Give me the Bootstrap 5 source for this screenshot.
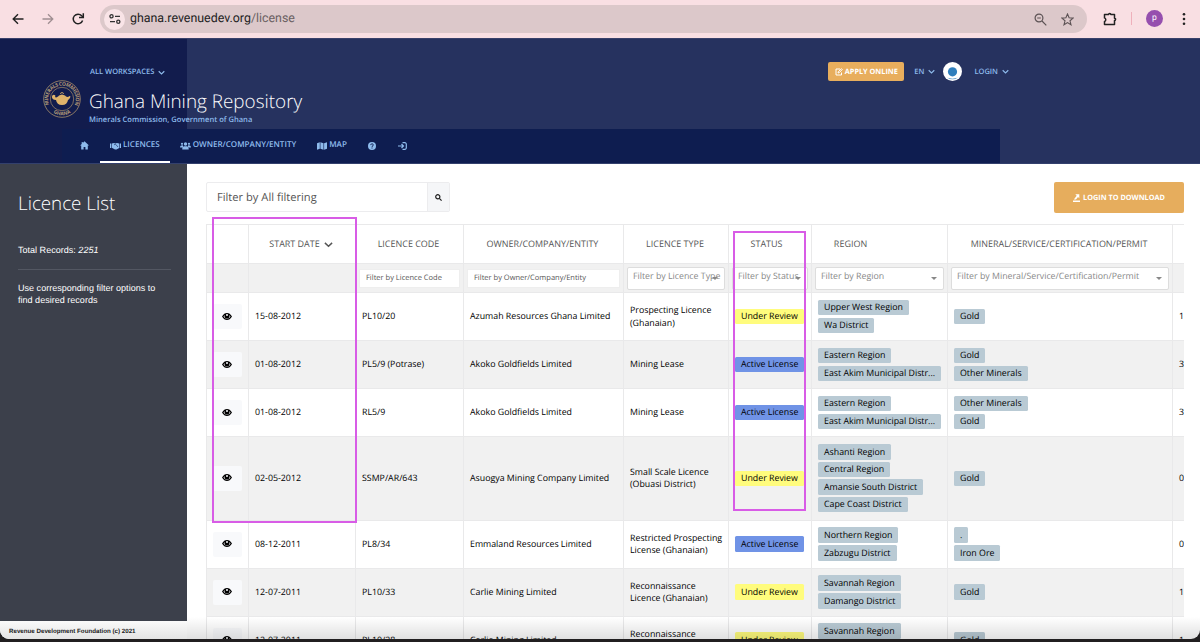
<!DOCTYPE html>
<html lang="en">
<head>
  <meta charset="UTF-8">
  <meta name="viewport" content="width=device-width, initial-scale=1.0">
  <title>Ghana Mining Repository</title>
  <link href="https://cdn.jsdelivr.net/npm/bootstrap@5.3.0/dist/css/bootstrap.min.css" rel="stylesheet">
  <style>
    body {
      background-color: #211f20;
      font-family: "Open Sans", sans-serif;
      font-size: 8.82px;
      line-height: 12.5px;
      color: #000;
      overflow: hidden;
      text-rendering: geometricPrecision;
    }
    svg { display: block; flex: none; }
    .window { height: 639px; background: #fff; border-radius: 0 0 9px 9px; }

    /* Browser bar */
    .browser-bar { height: 38px; background: #f9dfe3; padding: 0 9px 1px 12px; color: #222; }
    .icon-forward { margin-left: 18px; }
    .icon-reload { margin-left: 17px; }
    .address { width: 987px; height: 28px; border-radius: 14px; background: #dcc8ca; margin-left: 15px; padding: 1px 13px 0 4px; font: 12.4px/28px Roboto, sans-serif; }
    .address-path { color: #6a6062; }
    .site-info { width: 21px; height: 21px; background: #f9e4e7; margin-right: 5px; }
    .icon-star { margin-left: 14px; }
    .bar-divider { width: 1px; height: 13px; background: #efb0bb; }
    .profile { width: 17px; height: 17px; background: #964fae; color: #fff; font: 8.5px/17px Roboto, sans-serif; }

    /* Header */
    .site-header { height: 126px; background: linear-gradient(90deg, #121c4d 187px, #26325f 187px); border-top: 1px solid #3a416b; border-bottom: 1px solid #33406d; color: #8ebbec; }
    .header-top { height: 90px; padding: 25px 191px 0 43px; }
    .logo { margin-top: 16px; }
    .logo-text { font: 700 5px "Open Sans", sans-serif; fill: #b39a78; }
    .workspace { font-size: 7.5px; font-weight: 600; line-height: 16px; padding-left: 1px; }
    .site-title { font-size: 18.9px; line-height: 26px; font-weight: 300; color: #fff; margin-top: 8px; }
    .site-owner { font-size: 7.55px; line-height: 10px; font-weight: 600; padding-top: 1px; }
    .account { margin-top: -2px; }
    .apply-btn { width: 76px; height: 19px; background: #e8ae5d; border-radius: 2px; color: #fff; font-size: 7.3px; font-weight: 700; }
    .apply-btn svg, .main-nav svg { margin-right: 2px; }
    .lang { margin-left: 10px; }
    .main-nav { width: 938px; height: 34px; margin-left: 62px; background: #0e1d50; padding-left: 8px; }
    .main-nav .nav-link { height: 34px; padding: 1px 10px 0; color: #8ebbec; font-size: 8.05px; font-weight: 600; border-bottom: 2px solid transparent; }
    .main-nav .nav-link.active { border-color: #fff; margin-left: -1px; }
    .main-nav .nav-map { margin-left: 1px; margin-right: 1px; }

    /* Sidebar */
    .sidebar { width: 187px; color: #fff; font-family: "Liberation Sans", sans-serif; font-size: 9.05px; }
    .sidebar-body { height: 457px; background: #3c404b; padding: 26px 16px 0 18px; }
    .sidebar-title { font: 300 18.8px/26px "Open Sans", sans-serif; margin-bottom: 28px; }
    .sidebar-rule { height: 1px; background: #535762; margin: 12px 0 12px; }
    .page-footer { height: 18px; padding: 5px 8px 0 9px; color: #222; background: linear-gradient(#fafafa, #e4e4e4); border-bottom-left-radius: 9px; font-size: 6.2px; font-weight: 700; line-height: 12px; }

    /* Listing */
    .listing { height: 475px; padding: 18px 16px 0 19px; }
    .search-box { width: 244px; height: 30px; border: 1px solid #ececee; border-radius: 2px; font-size: 11.15px; color: #555; padding-left: 10px; }
    .search-label { padding-top: 2px; }
    .search-btn { width: 22px; height: 28px; background: #f5f6f8; border-left: 1px solid #ececee; }
    .download-btn { width: 130px; height: 31px; background: #e6ad5d; border-radius: 2px; color: #fff; font-size: 7.3px; font-weight: 700; padding-top: 1px; }
    .download-btn svg { margin-right: 3px; }
    .table-clip { margin-top: 11px; height: 415px; overflow: hidden; }
    .licences { table-layout: fixed; width: 1050px; border-collapse: separate; border-spacing: 0; }
    .licences th, .licences td { border-top: 1px solid #e9e9ea; border-left: 1px solid #e9e9ea; padding: 0 1px 0 6px; }
    .licences th { height: 39px; padding-right: 8px; text-align: center; font-weight: 500; font-size: 8.97px; color: #555; }
    .licences .th-status { padding-right: 13px; }
    .licences .th-region { padding-right: 64px; }
    .licences .filter-row td { height: 29px; padding: 0 3px; background: #f1f1f1; }
    .licences .data-row td { height: 48px; }
    .licences .data-row.tall td { height: 83.5px; }
    .licences .striped td { background: #f1f1f1; }
    .text-filter { height: 19px; background: #fff; border: 1px solid #eee; color: #555; font-size: 7.5px; padding: 1px 6px 0; white-space: nowrap; }
    .select-filter { height: 23px; background: #fff; border: 1px solid #ddd; border-radius: 2px; color: #888; font-size: 8.8px; padding: 0 5px 3px; position: relative; white-space: nowrap; }
    .select-filter::after { content: ""; position: absolute; right: 6px; top: 9px; border: 3px solid transparent; border-top-color: #888; border-bottom: 0; }
    .view-btn { width: 29px; height: 25px; background: #f8f9fb; border-radius: 2px; padding: 0 1px 1px 0; }
    .tag { display: table; height: 15.5px; line-height: 15px; padding: .5px 6px 0; background: #b9cad4; border-radius: 1.5px; white-space: nowrap; margin-bottom: 2.1px; }
    .tag:last-child { margin-bottom: 0; }
    .tag-review { background: #fffc7d; }
    .tag-active { background: #7093e6; }

    /* Overlays */
    .frame { position: absolute; border: 2px solid #d85ce6; }
    .frame-date { left: 212px; top: 217px; width: 145px; height: 306px; }
    .frame-status { left: 733px; top: 231px; width: 73px; height: 280px; }
    .bottom-shade { position: absolute; left: 187px; right: 0; top: 617px; height: 22px; background: linear-gradient(rgba(0,0,0,0), rgba(0,0,0,.12)); border-bottom-right-radius: 9px; }
  </style>
</head>
<body>
  <svg width="0" height="0" class="position-absolute">
    <symbol id="chev" viewBox="0 0 10 10"><path d="M1 3.200 5 7l4-3.800" fill="none" stroke="currentColor" stroke-width="1.600"/></symbol>
    <symbol id="eye" viewBox="0 0 20 14"><path fill="currentColor" fill-rule="evenodd" d="M0 7C3 2 6 0 10 0s7 2 10 7c-3 5-6 7-10 7S3 12 0 7Zm3 0c2 3 4 4.800 7 4.800S15 10 17 7c-.8-1.300-1.600-2.300-2.500-3a5 5 0 1 1-9 0C4.600 4.700 3.800 5.700 3 7Zm5-3a2 2 0 1 0 2-2 2 2 0 0 0-2 2Z"/></symbol>
  </svg>

  <div class="window d-flex flex-column">
    <div class="browser-bar d-flex align-items-center">
      <svg width="12" height="12" viewBox="0 0 12 12" fill="none" stroke="#222" stroke-width="1.4"><path d="M11.500 6H1.500M6 1.200 1.200 6 6 10.800"/></svg>
      <svg class="icon-forward" width="12" height="12" viewBox="0 0 12 12" fill="none" stroke="#a08f92" stroke-width="1.300"><path d="M.5 6h10M6 1.200 10.800 6 6 10.800"/></svg>
      <svg class="icon-reload" width="14" height="14" viewBox="0 0 14 14" fill="none" stroke="#222" stroke-width="1.500"><path d="M11.600 8.500A4.800 4.800 0 1 1 10.700 3.800L12 5"/><path d="M12.300 1.200v4.200H8"/></svg>
      <div class="address d-flex align-items-center">
        <span class="site-info rounded-circle d-flex align-items-center justify-content-center">
          <svg width="12" height="10" viewBox="0 0 12 10" fill="none" stroke="#333" stroke-width="1.300"><circle cx="2.500" cy="2.300" r="1.600"/><path d="M6 2.300h5M1 7.700h5"/><circle cx="9.300" cy="7.700" r="1.600"/></svg>
        </span>
        <span class="flex-grow-1">ghana.revenuedev.org<span class="address-path">/license</span></span>
        <svg width="13" height="13" viewBox="0 0 13 13" fill="none" stroke="#5c5254" stroke-width="1.200"><circle cx="5" cy="5" r="3.900"/><path d="m8 8 4.300 4.300M3.200 5h3.600"/></svg>
        <svg class="icon-star" width="13" height="13" viewBox="0 0 13 13" fill="none" stroke="#5c5254" stroke-width="1.100"><path d="m6.500 1 1.600 3.800 4 .3-3.100 2.700 1 4-3.500-2.200L3 11.800l1-4L.9 5.100l4-.3Z"/></svg>
      </div>
      <div class="d-flex align-items-center flex-grow-1 justify-content-between ps-3">
        <svg width="14" height="14" viewBox="0 0 14 14"><path d="M1.500 2.500H5.600a1.100 1.100 0 0 1 2.200 0h3.700v3.700a1.100 1.100 0 0 1 0 2.200v4.100h-10V9.500a1.900 1.900 0 0 0 0-3.600Z" fill="none" stroke="#222" stroke-width="1.500" stroke-linejoin="round"/></svg>
        <span class="bar-divider"></span>
        <span class="profile rounded-circle text-center">p</span>
        <svg width="14" height="14" viewBox="0 0 14 14" fill="#222"><circle cx="7" cy="2.200" r="1.300"/><circle cx="7" cy="7" r="1.300"/><circle cx="7" cy="11.800" r="1.300"/></svg>
      </div>
    </div>

    <header class="site-header">
      <div class="header-top d-flex">
        <svg class="logo" width="38" height="38" viewBox="0 0 38 38">
          <g fill="none" stroke="#a88f6c"><circle cx="19" cy="19" r="18.300" stroke-width=".8"/><circle cx="19" cy="19" r="11.700" stroke-width=".7"/></g>
          <path id="ringTop" d="M6.200 24.500A13.800 13.800 0 1 1 31.800 24.500" fill="none"/>
          <path id="ringBottom" d="M8 31A16.300 16.300 0 0 0 30 31" fill="none"/>
          <text class="logo-text"><textPath href="#ringTop" textLength="54">MINERALS COMMISSION</textPath></text>
          <text class="logo-text"><textPath href="#ringBottom" startOffset="50%" text-anchor="middle">GHANA</textPath></text>
          <path d="M12 17c1 1 3 0 4-1.500l3-1 3 1c1 1.500 3 2 4.500.500l1 .5c-.5 2-1.500 3-2.500 3.500-.5 3-2.500 5-6 5s-5.500-2-6-5c-2.500 0-4-1-4-3s2-3 3-1.500Z" fill="#dfb36b"/>
          <path d="M17.500 14a1.500 1.500 0 0 1 3 0M12.500 16c-2-1-3 .5-2.500 2" fill="none" stroke="#dfb36b" stroke-width=".8"/>
        </svg>
        <div class="flex-grow-1 ms-2">
          <div class="workspace d-flex align-items-center">ALL WORKSPACES <svg class="ms-1" width="7" height="7"><use href="#chev"/></svg></div>
          <div class="site-title">Ghana Mining Repository</div>
          <div class="site-owner">Minerals Commission, Government of Ghana</div>
        </div>
        <div class="account workspace d-flex align-items-center align-self-start">
          <span class="apply-btn d-flex align-items-center justify-content-center">
            <svg width="8" height="8" viewBox="0 0 8 8" fill="none" stroke="#fff" stroke-width="1"><path d="M5 1H1v6h5.500V4.500M3 5l.3-1.300L6.500.700l.8.8L4.200 4.700Z"/></svg>APPLY ONLINE
          </span>
          <span class="lang">EN</span><svg class="ms-1" width="7" height="7"><use href="#chev"/></svg>
          <svg class="ms-2" width="19" height="19" viewBox="0 0 19 19"><circle cx="9.500" cy="9.500" r="9.500" fill="#fff"/><circle cx="9.500" cy="9.800" r="4.600" fill="#2f7fbd"/><path d="M3 14.500c3.500 3 9.500 3 13 0a8.800 8.800 0 0 1-13 0Z" fill="#2f7fbd"/></svg>
          <span class="ms-2 ps-1">LOGIN</span><svg class="ms-1" width="7" height="7"><use href="#chev"/></svg>
        </div>
      </div>
      <nav class="main-nav nav flex-nowrap">
        <a class="nav-link d-flex align-items-center"><svg width="9" height="9" viewBox="0 0 9 9" fill="#8ebbec"><path d="M4.500.3 9 4.600H7.800v4H5.400V6H3.600v2.600H1.200v-4H0L1.700 3V.9h1.100V2Z"/></svg></a>
        <a class="nav-link active d-flex align-items-center"><svg width="11" height="8" viewBox="0 0 11 8" fill="#8ebbec"><path d="M0 1.500h1.200v4.500H0Zm9.800 0H11v4.500H9.800ZM1.800 1.600 4 1l1.200.5L7 1l2.200.6V6L6.500 7.600H5L1.800 5.700Z"/><path d="m4 2.800 1.500-.6L8 5" fill="none" stroke="#0e1d50" stroke-width=".6"/></svg>LICENCES</a>
        <a class="nav-link d-flex align-items-center"><svg width="11" height="8" viewBox="0 0 11 8" fill="#8ebbec"><circle cx="2" cy="1.800" r="1.100"/><circle cx="9" cy="1.800" r="1.100"/><circle cx="5.500" cy="2" r="1.700"/><path d="M0 5.500c0-2 2-2.600 3-2v2Zm11 0c0-2-2-2.600-3-2v2ZM2.300 7.500c0-3.500 1.500-3.300 3.200-3.300s3.200-.2 3.200 3.300Z"/></svg>OWNER/COMPANY/ENTITY</a>
        <a class="nav-link nav-map d-flex align-items-center"><svg width="10" height="8" viewBox="0 0 10 8" fill="#8ebbec"><path d="m0 1.200 2.800-.9v6.500L0 7.700Zm3.400-.9 3.100.9v6.500l-3.100-.9Zm3.700.9 2.900-.9v6.500l-2.900.9Z"/></svg>MAP</a>
        <a class="nav-link d-flex align-items-center"><svg width="8" height="8" viewBox="0 0 8 8"><circle cx="4" cy="4" r="4" fill="#8ebbec"/><path d="M2.700 3.100C2.700 1.400 5.400 1.500 5.300 3 5.300 3.900 4 3.900 4 4.900M4 5.500v1" fill="none" stroke="#0e1d50" stroke-width="1"/></svg></a>
        <a class="nav-link d-flex align-items-center"><svg width="9" height="8" viewBox="0 0 9 8" fill="none" stroke="#8ebbec" stroke-width="1.200"><path d="M4.500.7h2.300a1.500 1.500 0 0 1 1.500 1.500v3.600a1.500 1.500 0 0 1-1.500 1.500H4.500M0 4h5M3.500 2l2 2-2 2"/></svg></a>
      </nav>
    </header>

    <div class="d-flex">
      <aside class="sidebar flex-shrink-0">
        <div class="sidebar-body">
          <div class="sidebar-title">Licence List</div>
          <div>Total Records: <em>2251</em></div>
          <div class="sidebar-rule"></div>
          <div>Use corresponding filter options to<br>find desired records</div>
        </div>
        <div class="page-footer">Revenue Development Foundation (c) 2021</div>
      </aside>

      <main class="listing flex-grow-1 overflow-hidden">
        <div class="d-flex justify-content-between">
          <div class="search-box d-flex align-items-center justify-content-between">
            <span class="search-label">Filter by All filtering</span>
            <span class="search-btn d-flex align-items-center justify-content-center"><svg width="7" height="7" viewBox="0 0 7 7" fill="none" stroke="#222" stroke-width="1.200"><circle cx="2.800" cy="2.800" r="2.100"/><path d="m4.300 4.300 2.300 2.300"/></svg></span>
          </div>
          <div class="download-btn d-flex align-items-center justify-content-center">
            <svg width="7" height="8" viewBox="0 0 7 8" fill="#fff"><path d="M0 6.500h7V8H0ZM2.300.3h4v4L5 3.100 3 5.500H.8L3.700 1.700Z"/></svg>LOGIN TO DOWNLOAD
          </div>
        </div>
        <div class="table-clip">
          <table class="licences align-middle">
            <colgroup>
              <col style="width:42px"><col style="width:107px"><col style="width:108px"><col style="width:160px"><col style="width:105px"><col style="width:83px"><col style="width:136px"><col style="width:225px"><col>
            </colgroup>
            <thead>
              <tr>
                <th></th>
                <th><span class="d-flex align-items-center justify-content-center">START DATE <svg class="ms-1" width="9" height="9"><use href="#chev"/></svg></span></th>
                <th>LICENCE CODE</th><th>OWNER/COMPANY/ENTITY</th><th>LICENCE TYPE</th><th class="th-status">STATUS</th><th class="th-region">REGION</th><th>MINERAL/SERVICE/CERTIFICATION/PERMIT</th><th></th>
              </tr>
            </thead>
            <tbody id="licenceRows">
              <tr class="filter-row">
                <td></td><td></td>
                <td><div class="text-filter d-flex align-items-center">Filter by Licence Code</div></td>
                <td><div class="text-filter d-flex align-items-center">Filter by Owner/Company/Entity</div></td>
                <td><div class="select-filter d-flex align-items-center">Filter by Licence Type</div></td>
                <td><div class="select-filter d-flex align-items-center">Filter by Status</div></td>
                <td><div class="select-filter d-flex align-items-center">Filter by Region</div></td>
                <td><div class="select-filter d-flex align-items-center">Filter by Mineral/Service/Certification/Permit</div></td>
                <td></td>
              </tr>
            </tbody>
          </table>
        </div>
      </main>
    </div>
  </div>

  <div class="frame frame-date"></div>
  <div class="frame frame-status"></div>
  <div class="bottom-shade"></div>

  <script src="https://cdn.jsdelivr.net/npm/bootstrap@5.3.0/dist/js/bootstrap.bundle.min.js"></script>
  <script>
    // date, code, owner, type, status, regions, minerals, first digit of the next column
    const licences = [
      ['15-08-2012', 'PL10/20', 'Azumah Resources Ghana Limited', 'Prospecting Licence (Ghanaian)', 'Under Review', ['Upper West Region', 'Wa District'], ['Gold'], '1'],
      ['01-08-2012', 'PL5/9 (Potrase)', 'Akoko Goldfields Limited', 'Mining Lease', 'Active License', ['Eastern Region', 'East Akim Municipal Distr...'], ['Gold', 'Other Minerals'], '3'],
      ['01-08-2012', 'RL5/9', 'Akoko Goldfields Limited', 'Mining Lease', 'Active License', ['Eastern Region', 'East Akim Municipal Distr...'], ['Other Minerals', 'Gold'], '3'],
      ['02-05-2012', 'SSMP/AR/643', 'Asuogya Mining Company Limited', 'Small Scale Licence (Obuasi District)', 'Under Review', ['Ashanti Region', 'Central Region', 'Amansie South District', 'Cape Coast District'], ['Gold'], '0'],
      ['08-12-2011', 'PL8/34', 'Emmaland Resources Limited', 'Restricted Prospecting License (Ghanaian)', 'Active License', ['Northern Region', 'Zabzugu District'], ['.', 'Iron Ore'], '0'],
      ['12-07-2011', 'PL10/33', 'Carlie Mining Limited', 'Reconnaissance Licence (Ghanaian)', 'Under Review', ['Savannah Region', 'Damango District'], ['Gold'], '1'],
      ['12-07-2011', 'PL10/28', 'Carlie Mining Limited', 'Reconnaissance Licence (Ghanaian)', 'Under Review', ['Savannah Region', 'Bole District'], ['Gold'], '1']
    ];
    const tags = list => list.map(t => `<span class="tag">${t}</span>`).join('');

    licences.forEach(([date, code, owner, type, status, regions, minerals, next], i) => {
      const row = document.createElement('tr');
      row.className = 'data-row' + (i % 2 ? ' striped' : '') + (regions.length > 2 ? ' tall' : '');
      const kind = status === 'Under Review' ? 'tag-review' : 'tag-active';
      row.innerHTML = `
        <td><span class="view-btn d-flex align-items-center justify-content-center"><svg width="10" height="7"><use href="#eye"/></svg></span></td>
        <td>${date}</td><td>${code}</td><td>${owner}</td><td>${type}</td>
        <td><span class="tag ${kind}">${status}</span></td>
        <td>${tags(regions)}</td>
        <td>${tags(minerals)}</td>
        <td>${next}</td>`;
      document.getElementById('licenceRows').appendChild(row);
    });
  </script>
</body>
</html>
